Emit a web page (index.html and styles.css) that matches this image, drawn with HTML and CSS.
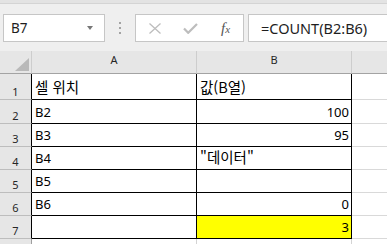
FILE: index.html
```html
<!DOCTYPE html>
<html lang="ko">
<head>
  <meta charset="UTF-8">
  <title>COUNT 예제</title>
  <link rel="stylesheet" href="styles.css">
</head>
<body>
  <div class="ribbon-edge"></div>

  <div class="formula-bar">
    <div class="name-box"><span>B7</span><span class="caret"></span></div>
    <div class="grip"><i></i><i></i><i></i></div>
    <div class="fx-buttons">
      <svg class="icon-x" width="12" height="11" viewBox="0 0 12 11">
        <path d="M0.5 0.5 L11.5 10.5 M11.5 0.5 L0.5 10.5" stroke="#bdbdbd" stroke-width="1.3" fill="none"/>
      </svg>
      <svg class="icon-check" width="15" height="11" viewBox="0 0 15 11">
        <path d="M1 5.5 L5.2 9.8 L14 1" stroke="#bdbdbd" stroke-width="2.2" fill="none"/>
      </svg>
      <span class="fx">f<span>x</span></span>
    </div>
    <div class="formula">=COUNT(B2:B6)</div>
  </div>

  <div class="sheet">
    <div class="hd corner">
      <svg width="14" height="13" viewBox="0 0 14 13"><polygon points="14,0 14,13 0,13" fill="#b9b9b9"/></svg>
    </div>
    <div class="hd">A</div>
    <div class="hd">B</div>
    <div class="hd last"></div>

    <div class="rh">1</div>
    <div class="c"><span class="ko">셀 위치</span></div>
    <div class="c"><span class="ko">값(B열)</span></div>
    <div class="out"></div>

    <div class="rh">2</div>
    <div class="c">B2</div>
    <div class="c num">100</div>
    <div class="out"></div>

    <div class="rh">3</div>
    <div class="c">B3</div>
    <div class="c num">95</div>
    <div class="out"></div>

    <div class="rh">4</div>
    <div class="c">B4</div>
    <div class="c"><span class="ko">"데이터"</span></div>
    <div class="out"></div>

    <div class="rh">5</div>
    <div class="c">B5</div>
    <div class="c"></div>
    <div class="out"></div>

    <div class="rh">6</div>
    <div class="c">B6</div>
    <div class="c num">0</div>
    <div class="out"></div>

    <div class="rh">7</div>
    <div class="c"></div>
    <div class="c num sel">3</div>
    <div class="out"></div>

    <div class="rh empty"></div>
    <div class="c empty"></div>
    <div class="c empty"></div>
    <div class="out empty"></div>
  </div>
</body>
</html>
```

FILE: styles.css
```css
body { margin:0; width:387px; height:244px; overflow:hidden; background:#fff;
       font-family:"Noto Sans","Noto Sans CJK KR",sans-serif; color:#000; }

.ribbon-edge { height:3px; background:#e3e3e3; border-bottom:1px solid #d4d4d4; }

.formula-bar { display:flex; align-items:center; height:47px; box-sizing:border-box;
               padding:10px 0 9px 3px; background:#efefef; }
.name-box { display:flex; align-items:center; width:102px; height:28px; box-sizing:border-box;
            border:1px solid #c6c6c6; background:#fff; padding-left:7px; font-size:13.5px; color:#1e1e1e; }
.caret { margin-left:auto; margin-right:11px; width:0; height:0;
         border-left:3.5px solid transparent; border-right:3.5px solid transparent; border-top:4px solid #777; }
.grip { width:30px; display:flex; flex-direction:column; align-items:center; gap:3px; }
.grip i { display:block; width:2px; height:2px; background:#a3a3a3; }
.fx-buttons { display:flex; align-items:center; width:109px; height:28px; box-sizing:border-box;
              border:1px solid #c6c6c6; background:#fff; padding-left:13px; }
.icon-x { margin-right:22px; }
.icon-check { margin-right:23px; }
.fx { font-family:"Liberation Serif",serif; font-style:italic; font-size:15px; color:#555; line-height:1; }
.fx span { font-size:11px; }
.formula { flex:1; display:flex; align-items:center; margin-left:4px; height:28px; box-sizing:border-box;
           border:1px solid #c6c6c6; border-right:0; background:#fff; padding-left:12px;
           font-size:14.5px; color:#1e1e1e; }

.sheet { display:grid; grid-template-columns:32px 165px 155px 1fr;
         grid-template-rows:23px 26px 24px repeat(5,23px) 5px; }
.sheet > div { box-sizing:border-box; }

.hd { background:#e6e6e6; border-right:1px solid #cdcdcd; border-bottom:1px solid #a3a3a3;
      text-align:center; font-size:11px; padding-top:1px; color:#262626; }
.hd.last { border-right:0; }
.corner { display:flex; justify-content:flex-end; align-items:flex-end; padding:0 2px 2px 0; }
.corner svg { display:block; }

.rh { display:flex; align-items:flex-end; justify-content:center; background:#e6e6e6;
      border-right:1px solid #000; border-bottom:1px solid #bdbdbd; font-size:11px; color:#262626; }
.rh.empty { border-right-color:#9f9f9f; border-bottom:0; }

.c { display:flex; align-items:flex-end; border-right:1px solid #000; border-bottom:1px solid #000;
     padding:0 2px 2px 3px; font-size:13px; white-space:nowrap; }
.c.num { justify-content:flex-end; }
.c.sel { background:#ffff00; }
.c.empty { border-right-color:#d4d4d4; border-bottom:0; }
.ko { font-family:"Noto Sans CJK KR",sans-serif; font-size:14.5px; }

.out { border-bottom:1px solid #d9d9d9; }
.out.empty { border-bottom:0; }
```
